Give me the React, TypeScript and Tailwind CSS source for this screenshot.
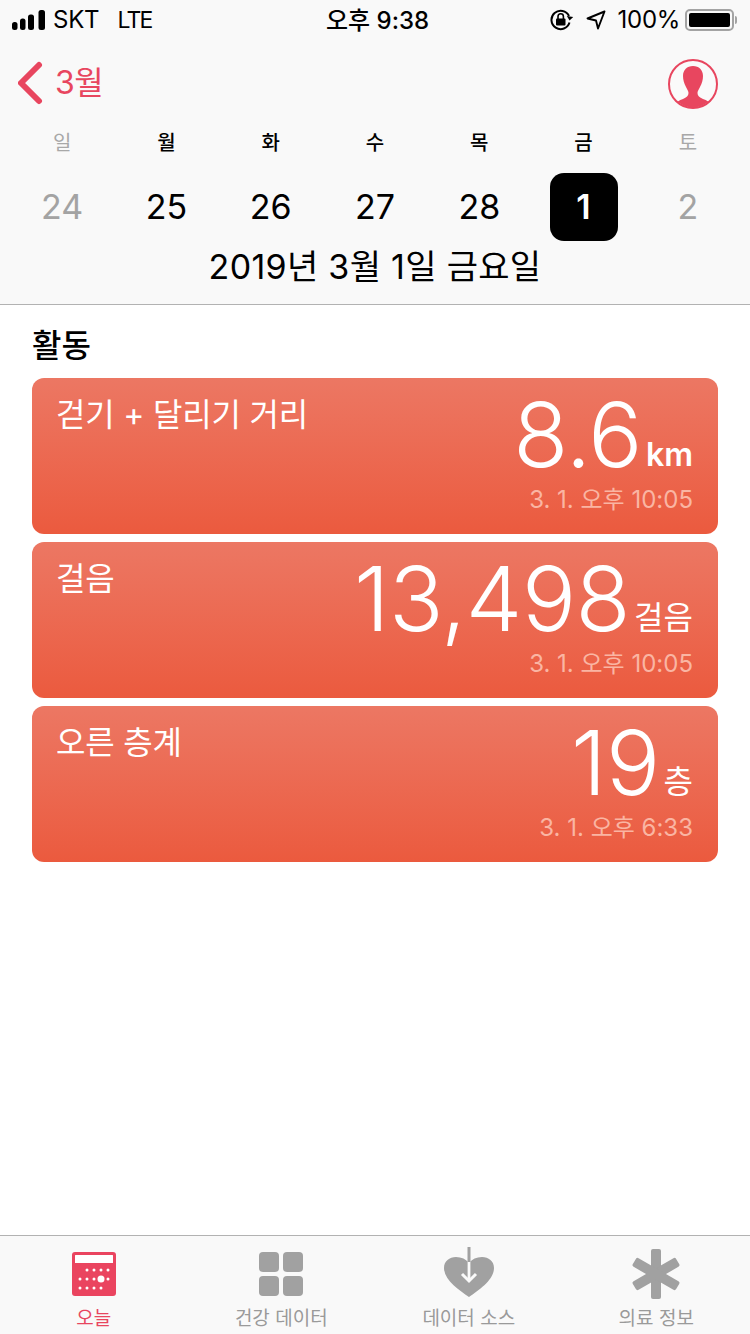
import React from "react";

const sans = "font-['Inter','Noto_Sans_CJK_KR',sans-serif]";

function Signal() {
  return (
    <svg width="33" height="20" viewBox="0 0 33 20" className="block">
      <rect x="0" y="12" width="5.500" height="8" rx="2.500" fill="#000" />
      <rect x="8" y="8.500" width="5.500" height="11.500" rx="2.500" fill="#000" />
      <rect x="16" y="4.500" width="6" height="15.500" rx="2.500" fill="#000" />
      <rect x="26.500" y="0" width="6.500" height="20" rx="2.500" fill="#000" />
    </svg>
  );
}

function LockIcon() {
  return (
    <svg width="24" height="22" viewBox="0 0 24 22" className="block">
      <path d="M19.500 13.500A9.200 9.200 0 1 1 19 7" fill="none" stroke="#000" strokeWidth="2" />
      <path d="M16.500 7.500 L23 7.500 L20 11.500 Z" fill="#000" transform="rotate(10 20 9)" />
      <rect x="6" y="9.500" width="9.500" height="7" rx="1" fill="#000" />
      <path d="M8 10V7.500a2.700 2.700 0 0 1 5.400 0V10" fill="none" stroke="#000" strokeWidth="1.600" />
    </svg>
  );
}

function LocationIcon() {
  return (
    <svg width="20" height="20" viewBox="0 0 20 20" className="block">
      <path d="M18.500 1.500 L1.500 8.500 L10 10.500 L12 18.500 Z" fill="none" stroke="#000" strokeWidth="1.900" strokeLinejoin="round" />
    </svg>
  );
}

function Battery() {
  return (
    <div className="flex items-center">
      <div className="w-[49px] h-[22px] rounded-[5px] border-2 border-[#a3a3a3] p-[2px]">
        <div className="w-full h-full rounded-[2px] bg-black" />
      </div>
      <div className="w-[2px] h-[8px] ml-[1px] rounded-r-[2px] bg-[#a3a3a3]" />
    </div>
  );
}

function StatusBar() {
  return (
    <div className="relative h-[40px] flex items-center justify-between pl-[12px] pr-[13px] text-black">
      <div className="flex items-center text-[24px] leading-none tracking-[-0.2px]">
        <Signal />
        <span className="ml-[8px] font-normal">SKT</span>
        <span className="ml-[18px] text-[23px] tracking-[-1.800px]">LTE</span>
      </div>
      <div className="absolute left-[326px] top-[7px] text-[24px] leading-[28px] font-medium whitespace-nowrap">오후 9:38</div>
      <div className="flex items-center text-[24px] leading-none">
        <LockIcon />
        <div className="ml-[12px]"><LocationIcon /></div>
        <span className="ml-[12px] tracking-[-0.300px]">100%</span>
        <div className="ml-[5px]"><Battery /></div>
      </div>
    </div>
  );
}

function Avatar() {
  return (
    <svg width="50" height="50" viewBox="0 0 50 50" className="block">
      <defs>
        <clipPath id="av"><circle cx="25" cy="25" r="23.500" /></clipPath>
      </defs>
      <circle cx="25" cy="25" r="24" fill="#fafafa" stroke="#e8465f" strokeWidth="2" />
      <g clipPath="url(#av)">
        <path
          d="M25 7c-6 0-10 4-10 10 0 4 1 7 3 11 1.500 3 2.500 4 2.500 6 0 3-2 4.500-5.500 6-4 1.500-6 2.500-8 5L3 50H47L43 45c-2-2.500-4-3.500-8-5-3.500-1.500-5.500-3-5.500-6 0-2 1-3 2.500-6 2-4 3-7 3-11 0-6-4-10-10-10z"
          fill="#e8465f"
        />
      </g>
    </svg>
  );
}

const days = [
  { w: "일", d: "24", muted: true },
  { w: "월", d: "25" },
  { w: "화", d: "26" },
  { w: "수", d: "27" },
  { w: "목", d: "28" },
  { w: "금", d: "1", selected: true },
  { w: "토", d: "2", muted: true },
];

function Header() {
  return (
    <header className="bg-[#f9f9f9] border-b border-[#b2b2b2] h-[305px] shrink-0">
      <StatusBar />
      <div className="h-[86px] pt-[19px] pl-[18px] pr-[32px] flex items-start justify-between">
        <div className="flex items-center h-[50px] mt-[-1px]">
          <svg width="26" height="46" viewBox="0 0 26 46" className="block">
            <path d="M21 5 L3 23 L21 41" fill="none" stroke="#e8465f" strokeWidth="6" strokeLinecap="round" strokeLinejoin="round" />
          </svg>
          <span className="ml-[11px] text-[32px] leading-none text-[#e8465f] tracking-[-0.500px]">3월</span>
        </div>
        <Avatar />
      </div>
      <div className="grid grid-cols-7 px-[10px]">
        {days.map((x) => (
          <div key={x.w} className={`h-[33px] text-center text-[20px] leading-[35px] ${x.muted ? "text-[#a8a8a8] font-normal" : "text-black font-medium"}`}>
            {x.w}
          </div>
        ))}
      </div>
      <div className="grid grid-cols-7 px-[10px] mt-[14px]">
        {days.map((x) => (
          <div key={x.d} className="h-[68px] flex items-center justify-center">
            {x.selected ? (
              <div className="w-[68px] h-[68px] rounded-[14px] bg-black text-white text-[34px] font-semibold leading-none flex items-center justify-center">{x.d}</div>
            ) : (
              <span className={`text-[34px] leading-none ${x.muted ? "text-[#a3a3a3]" : "text-black"}`}>{x.d}</span>
            )}
          </div>
        ))}
      </div>
      <div className="mt-[6px] text-center text-[34px] leading-[40px] text-black tracking-[0.300px] whitespace-nowrap">2019년 3월 1일 금요일</div>
    </header>
  );
}

function Card({ title, value, unit, time, latin }: { title: string; value: string; unit: string; time: string; latin?: boolean }) {
  return (
    <div className="h-[156px] rounded-[12px] bg-gradient-to-b from-[#ec7763] to-[#eb5a3e] flex justify-between pl-[24px] pr-[25px] text-white">
      <div className="pt-[17px] text-[32px] leading-[40px] whitespace-nowrap tracking-[-0.200px]">{title}</div>
      <div className="flex flex-col items-end">
        <div className="h-[107px] pt-[8px] whitespace-nowrap text-right">
          <span className="text-[90px] leading-[98px] font-[260] tracking-[-0.500px]">{value}</span>
          <span className={`ml-[4px] text-[32px] leading-none ${latin ? "font-semibold align-[1px]" : "font-normal align-[2px]"}`}>{unit}</span>
        </div>
        <div className="text-[24px] leading-[30px] font-normal text-[#fab5a3] whitespace-nowrap">{time}</div>
      </div>
    </div>
  );
}

function TodayIcon() {
  const row = (y: number, xs: number[]) => xs.map((x) => <circle key={`${x}-${y}`} cx={x} cy={y} r="1.500" fill="#fff" />);
  return (
    <svg width="44" height="44" viewBox="0 0 44 44" className="block">
      <rect x="0" y="0" width="44" height="44" rx="3" fill="#ea445f" />
      <rect x="3" y="3" width="38" height="8" rx="0.500" fill="#fff" />
      {row(18, [15, 22, 29, 36])}
      {row(27, [8, 15, 22, 36])}
      <circle cx="29" cy="27" r="3.500" fill="#fff" />
      {row(36, [8, 15, 22, 29])}
    </svg>
  );
}

function GridIcon() {
  return (
    <div className="grid grid-cols-2 gap-[4px] w-[44px] h-[44px]">
      <div className="rounded-[4px] bg-[#a1a1a1]" />
      <div className="rounded-[4px] bg-[#a1a1a1]" />
      <div className="rounded-[4px] bg-[#a1a1a1]" />
      <div className="rounded-[4px] bg-[#a1a1a1]" />
    </div>
  );
}

function HeartIcon() {
  return (
    <svg width="50" height="50" viewBox="0 0 50 50" className="block -mb-[1px]">
      <path d="M25 50C15 43 0 33 0 21 0 14 5.500 10 12 10c5.500 0 10 2 13 6 3-4 7.500-6 13-6 6.500 0 12 4 12 11C50 33 35 43 25 50z" fill="#a1a1a1" />
      <path d="M25 0V16" stroke="#a1a1a1" strokeWidth="3" fill="none" strokeLinecap="round" />
      <path d="M25 15V34" stroke="#fafafa" strokeWidth="2.800" fill="none" />
      <path d="M18 27l7 7 7-7" stroke="#fafafa" strokeWidth="3" fill="none" />
    </svg>
  );
}

function StarIcon() {
  return (
    <svg width="50" height="50" viewBox="0 0 50 50" className="block -mb-[3px]">
      <g fill="#a1a1a1">
        <rect x="20" y="0" width="10" height="50" rx="2" />
        <rect x="20" y="0" width="10" height="50" rx="2" transform="rotate(60 25 25)" />
        <rect x="20" y="0" width="10" height="50" rx="2" transform="rotate(-60 25 25)" />
      </g>
    </svg>
  );
}

function Tab({ icon, label, active }: { icon: React.ReactNode; label: string; active?: boolean }) {
  return (
    <div className="flex flex-col items-center">
      <div className="h-[60px] flex items-end justify-center">{icon}</div>
      <div className={`mt-[9px] text-[19px] leading-[28px] whitespace-nowrap ${active ? "text-[#e8465f]" : "text-[#9a9a9a]"}`}>{label}</div>
    </div>
  );
}

function TabBar() {
  return (
    <nav className="h-[99px] shrink-0 bg-[#f9f9f9] border-t border-[#b2b2b2] grid grid-cols-4 overflow-hidden">
      <Tab icon={<TodayIcon />} label="오늘" active />
      <Tab icon={<GridIcon />} label="건강 데이터" />
      <Tab icon={<HeartIcon />} label="데이터 소스" />
      <Tab icon={<StarIcon />} label="의료 정보" />
    </nav>
  );
}

export default function App() {
  return (
    <div className={`w-[750px] h-[1334px] overflow-hidden bg-white flex flex-col ${sans}`}>
      <Header />
      <main className="flex-1 px-[32px]">
        <h2 className="pt-[20px] h-[73px] text-[32px] leading-[42px] font-medium text-black">활동</h2>
        <div className="flex flex-col gap-[8px]">
          <Card title="걷기 + 달리기 거리" value="8.6" unit="km" time="3. 1. 오후 10:05" latin />
          <Card title="걸음" value="13,498" unit="걸음" time="3. 1. 오후 10:05" />
          <Card title="오른 층계" value="19" unit="층" time="3. 1. 오후 6:33" />
        </div>
      </main>
      <TabBar />
    </div>
  );
}
